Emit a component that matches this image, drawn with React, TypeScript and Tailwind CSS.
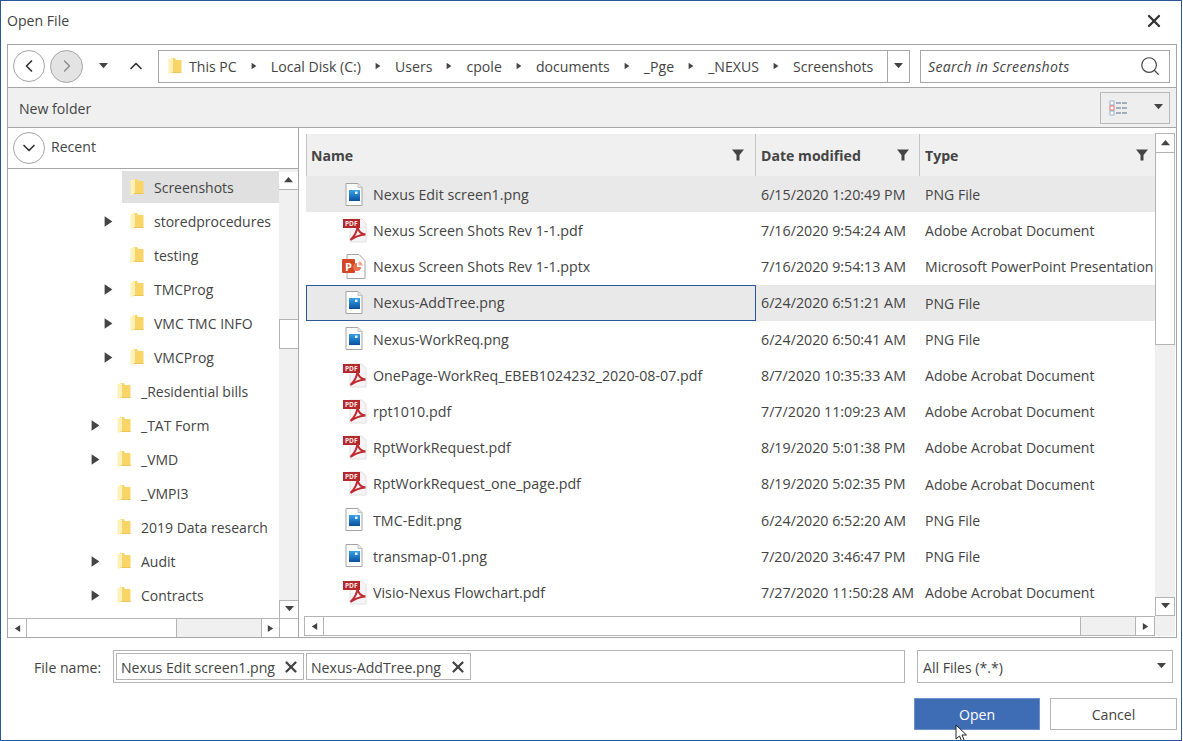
import React from 'react';
import { ChevronLeft, ChevronRight, ChevronDown, ChevronUp, Search, X } from 'lucide-react';

type FileKind = 'png' | 'pdf' | 'pptx';
type Dir = 'up' | 'down' | 'left' | 'right';

interface FileRow {
  name: string;
  date: string;
  type: string;
  kind: FileKind;
  selected?: boolean;
  focused?: boolean;
}

const files: FileRow[] = [
  { name: 'Nexus Edit screen1.png', date: '6/15/2020 1:20:49 PM', type: 'PNG File', kind: 'png', selected: true },
  { name: 'Nexus Screen Shots Rev 1-1.pdf', date: '7/16/2020 9:54:24 AM', type: 'Adobe Acrobat Document', kind: 'pdf' },
  { name: 'Nexus Screen Shots Rev 1-1.pptx', date: '7/16/2020 9:54:13 AM', type: 'Microsoft PowerPoint Presentation', kind: 'pptx' },
  { name: 'Nexus-AddTree.png', date: '6/24/2020 6:51:21 AM', type: 'PNG File', kind: 'png', selected: true, focused: true },
  { name: 'Nexus-WorkReq.png', date: '6/24/2020 6:50:41 AM', type: 'PNG File', kind: 'png' },
  { name: 'OnePage-WorkReq_EBEB1024232_2020-08-07.pdf', date: '8/7/2020 10:35:33 AM', type: 'Adobe Acrobat Document', kind: 'pdf' },
  { name: 'rpt1010.pdf', date: '7/7/2020 11:09:23 AM', type: 'Adobe Acrobat Document', kind: 'pdf' },
  { name: 'RptWorkRequest.pdf', date: '8/19/2020 5:01:38 PM', type: 'Adobe Acrobat Document', kind: 'pdf' },
  { name: 'RptWorkRequest_one_page.pdf', date: '8/19/2020 5:02:35 PM', type: 'Adobe Acrobat Document', kind: 'pdf' },
  { name: 'TMC-Edit.png', date: '6/24/2020 6:52:20 AM', type: 'PNG File', kind: 'png' },
  { name: 'transmap-01.png', date: '7/20/2020 3:46:47 PM', type: 'PNG File', kind: 'png' },
  { name: 'Visio-Nexus Flowchart.pdf', date: '7/27/2020 11:50:28 AM', type: 'Adobe Acrobat Document', kind: 'pdf' },
];

const tree: { label: string; deep: boolean; arrow: boolean; selected?: boolean }[] = [
  { label: 'Screenshots', deep: true, arrow: false, selected: true },
  { label: 'storedprocedures', deep: true, arrow: true },
  { label: 'testing', deep: true, arrow: false },
  { label: 'TMCProg', deep: true, arrow: true },
  { label: 'VMC TMC INFO', deep: true, arrow: true },
  { label: 'VMCProg', deep: true, arrow: true },
  { label: '_Residential bills', deep: false, arrow: false },
  { label: '_TAT Form', deep: false, arrow: true },
  { label: '_VMD', deep: false, arrow: true },
  { label: '_VMPI3', deep: false, arrow: false },
  { label: '2019 Data research', deep: false, arrow: false },
  { label: 'Audit', deep: false, arrow: true },
  { label: 'Contracts', deep: false, arrow: true },
];

const crumbs = ['This PC', 'Local Disk (C:)', 'Users', 'cpole', 'documents', '_Pge', '_NEXUS', 'Screenshots'];

const Folder = () => (
  <svg width="14" height="18" viewBox="0 0 14 18" className="shrink-0">
    <path d="M3 1h4l1 2h5.500v13H3z" fill="#f9d567" />
    <path d="M.5 2.500L5 1v14.500L.5 17.500z" fill="#fff1b8" />
    <path d="M5 15h8.500v1H3z" fill="#ecc45c" />
  </svg>
);

const PngIcon = () => (
  <svg width="18" height="23" viewBox="0 0 18 23">
    <path d="M1 .5h12l4 4v18H1z" fill="#fff" stroke="#a4a4a4" />
    <path d="M13 .5v4h4" fill="#e6e6e6" stroke="#c4c4c4" />
    <defs>
      <linearGradient id="pngfill" x1="0" y1="0" x2="0" y2="1">
        <stop offset="0" stopColor="#36a3ea" />
        <stop offset="1" stopColor="#0a4f9c" />
      </linearGradient>
    </defs>
    <rect x="4" y="7" width="11" height="11" fill="url(#pngfill)" />
    <rect x="10" y="8.500" width="2.500" height="2.500" fill="#e3f3ff" />
  </svg>
);

const PdfIcon = () => (
  <svg width="26" height="25" viewBox="0 0 26 25">
    <path d="M9 1h12l4 4v19H9z" fill="#f5f3f3" stroke="#e2e2e2" />
    <rect x="2" y="1" width="17" height="9" fill="#b3282d" />
    <text x="4" y="8" fontSize="6.500" fontWeight="700" fill="#f8e6e6">PDF</text>
    <path d="M16.500 8c-.2 5-3 10-7 14M16.500 8c.5 5 3.500 8 8 8.500M9.500 22c3-2.500 9.500-5.500 15-5.500" fill="none" stroke="#bf2a30" strokeWidth="2" />
  </svg>
);

const PptIcon = () => (
  <svg width="24" height="25" viewBox="0 0 24 25">
    <path d="M5 .5h12l6 6v18H5z" fill="#fff" stroke="#a4a4a4" />
    <rect x="0" y="5" width="13" height="14" rx="1" fill="#d24726" />
    <text x="3" y="16.500" fontSize="11" fontWeight="700" fill="#fff">P</text>
    <path d="M15 9a4 4 0 1 0 4 4h-4z" fill="#e8734f" />
    <path d="M16.500 7.500a4 4 0 0 1 4 4h-4z" fill="#f0a58c" />
  </svg>
);

const FileIcon = ({ kind }: { kind: FileKind }) => {
  if (kind === 'pdf') return <PdfIcon />;
  if (kind === 'pptx') return <PptIcon />;
  return <PngIcon />;
};

const Tri = ({ dir, size = 9, className }: { dir: Dir; size?: number; className?: string }) => {
  const pts = {
    up: '0,7 5,1 10,7',
    down: '0,1 10,1 5,7',
    left: '8,1 8,9 2,5',
    right: '2,1 2,9 8,5',
  }[dir];
  return (
    <svg width={size} height={size} viewBox="0 0 10 10" className={className}>
      <polygon points={pts} fill="#444" />
    </svg>
  );
};

const Funnel = () => (
  <svg width="12" height="12" viewBox="0 0 12 12">
    <path d="M0 .5h12L7.500 6v5.500h-3V6z" fill="#444" />
  </svg>
);

const ScrollBtn = ({ dir, className }: { dir: Dir; className: string }) => (
  <div className={`flex shrink-0 items-center justify-center border-[#b4b4b4] bg-white ${className}`}>
    <Tri dir={dir} />
  </div>
);

export default function App() {
  return (
    <div className="flex h-[741px] w-[1182px] flex-col overflow-hidden border border-[#2b579a] bg-white font-['Open_Sans',sans-serif] text-[14.1px] text-[#444]">
      <div className="flex h-[43px] shrink-0 items-center justify-between pb-[4px] pl-[6px] pr-[17px]">
        <span>Open File</span>
        <X size={20} strokeWidth={2.800} className="text-[#333]" />
      </div>

      <div className="mx-[6px] flex h-[594px] w-[1170px] shrink-0 flex-col border border-[#a6a6a6]">
        <div className="flex h-[43px] shrink-0 items-center border-b border-[#a6a6a6] pl-[5px]">
          <div className="flex h-[32px] w-[32px] items-center justify-center rounded-full border border-[#a6a6a6]">
            <ChevronLeft size={20} strokeWidth={2} className="text-[#333]" />
          </div>
          <div className="ml-[5px] flex h-[33px] w-[33px] items-center justify-center rounded-full border border-[#a6a6a6] bg-[#e3e3e3]">
            <ChevronRight size={20} strokeWidth={1.500} className="text-[#888]" />
          </div>
          <Tri dir="down" className="ml-[16px]" />
          <ChevronUp size={20} strokeWidth={2} className="ml-[18px] text-[#333]" />
          <div className="ml-[12px] flex h-[33px] w-[752px] items-center border border-[#a6a6a6]">
            <div className="flex min-w-0 flex-1 items-center pl-[9px]">
              <Folder />
              {crumbs.map((c, i) => (
                <React.Fragment key={c}>
                  <span className={`whitespace-nowrap pt-[2px] ${i === 0 ? 'ml-[7px]' : ''}`}>{c}</span>
                  {i < crumbs.length - 1 && (
                    <span className="flex w-[34.1px] justify-center">
                      <Tri dir="right" size={8} />
                    </span>
                  )}
                </React.Fragment>
              ))}
            </div>
            <div className="flex h-full w-[22px] items-center justify-center border-l border-[#a6a6a6]">
              <Tri dir="down" />
            </div>
          </div>
          <div className="ml-[10px] flex h-[33px] w-[250px] items-center justify-between border border-[#a6a6a6] pl-[7px] pr-[8px]">
            <span className="pt-[2px] italic tracking-[0.3px]">Search in Screenshots</span>
            <Search size={22} strokeWidth={1.300} className="text-[#444]" />
          </div>
        </div>

        <div className="flex h-[40px] shrink-0 items-center justify-between border-b border-[#a6a6a6] bg-[#f0f0f0] pl-[11px] pr-[6px]">
          <span className="pt-[2px]">New folder</span>
          <div className="flex h-[32px] w-[70px] items-center justify-between border border-[#b8b8b8] bg-[#eeeeee] pl-[8px] pr-[6px]">
            <svg width="20" height="16" viewBox="0 0 20 16">
              <rect x="1" y="1" width="4" height="4" fill="#fff" stroke="#7f9ec4" strokeWidth="0.800" />
              <rect x="1" y="6" width="4" height="4" fill="#fff" stroke="#d6584f" strokeWidth="0.800" />
              <rect x="1" y="11" width="4" height="4" fill="#fff" stroke="#7f9ec4" strokeWidth="0.800" />
              <path d="M7 3h12M7 8h12M7 13h12" stroke="#5b6f8c" strokeWidth="1" strokeDasharray="5 1" />
            </svg>
            <Tri dir="down" />
          </div>
        </div>

        <div className="flex min-h-0 flex-1">
          <div className="flex w-[291px] shrink-0 flex-col border-r border-[#a6a6a6]">
            <div className="flex h-[41px] shrink-0 items-center border-b border-[#a6a6a6] pl-[5px]">
              <div className="flex h-[32px] w-[32px] items-center justify-center rounded-full border border-[#a6a6a6]">
                <ChevronDown size={20} strokeWidth={2} className="text-[#333]" />
              </div>
              <span className="ml-[6px] pb-[2px]">Recent</span>
            </div>
            <div className="flex min-h-0 flex-1">
              <div className="min-w-0 flex-1 overflow-hidden pt-[1px] text-[14px]">
                {tree.map((t) => (
                  <div key={t.label} className="flex h-[34px] items-center">
                    <div className={`flex shrink-0 justify-end ${t.deep ? 'w-[107px]' : 'w-[94px]'}`}>
                      {t.arrow && <Tri dir="right" size={13} />}
                    </div>
                    <div className={`ml-[7px] flex h-[32px] flex-1 items-center pl-[8px] ${t.selected ? 'bg-[#e0e0e0]' : ''}`}>
                      <Folder />
                      <span className="ml-[10px] whitespace-nowrap">{t.label}</span>
                    </div>
                  </div>
                ))}
              </div>
              <div className="flex w-[19px] shrink-0 flex-col bg-[#f0f0f0] pt-[3px]">
                <ScrollBtn dir="up" className="h-[18px] border-b" />
                <div className="mt-[129px] h-[30px] border-y border-l border-[#b4b4b4] bg-white" />
                <div className="flex-1" />
                <ScrollBtn dir="down" className="h-[18px] border-l border-t" />
              </div>
            </div>
            <div className="flex h-[19px] shrink-0 border-t border-[#b4b4b4]">
              <ScrollBtn dir="left" className="w-[19px] border-r" />
              <div className="w-[150px] border-r border-[#b4b4b4] bg-white" />
              <div className="w-[84px] bg-[#f0f0f0]" />
              <ScrollBtn dir="right" className="w-[19px] border-l border-r" />
            </div>
          </div>

          <div className="flex min-w-0 flex-1 flex-col pl-[7px] pt-[6px]">
            <div className="flex min-h-0 flex-1">
              <div className="min-w-0 flex-1">
                <div className="flex h-[42px] border-l border-[#c4c4c4] bg-[#f0f0f0] font-bold">
                  <div className="flex w-[449px] items-center justify-between border-r border-[#c4c4c4] pl-[4px] pr-[11px]">
                    <span className="pt-[2px]">Name</span>
                    <Funnel />
                  </div>
                  <div className="flex w-[164px] items-center justify-between border-r border-[#c4c4c4] pl-[5px] pr-[10px]">
                    <span className="pt-[2px]">Date modified</span>
                    <Funnel />
                  </div>
                  <div className="flex flex-1 items-center justify-between pl-[5px] pr-[7px]">
                    <span className="pt-[2px]">Type</span>
                    <Funnel />
                  </div>
                </div>
                {files.map((f) => (
                  <div
                    key={f.name}
                    className={`relative flex h-[36.2px] items-center text-[14.25px] ${f.selected ? 'bg-[#e9e9e9]' : ''}`}
                  >
                    {f.focused && <div className="absolute left-0 top-0 h-full w-[450px] border border-[#2b579a]" />}
                    <div className="flex w-[67px] shrink-0 justify-center pl-[29px]">
                      <FileIcon kind={f.kind} />
                    </div>
                    <span className="w-[388px] shrink-0 truncate pt-[1px]">{f.name}</span>
                    <span className="w-[164px] shrink-0 whitespace-nowrap pt-[1px]">{f.date}</span>
                    <span className="min-w-0 flex-1 whitespace-nowrap pt-[1px] text-[14.05px]">{f.type}</span>
                  </div>
                ))}
              </div>
              <div className="-mt-[1px] mr-[1px] flex w-[20px] shrink-0 flex-col bg-[#f0f0f0]">
                <ScrollBtn dir="up" className="h-[20px] border" />
                <div className="h-[192px] border-x border-b border-[#b4b4b4] bg-white" />
                <div className="flex-1" />
                <ScrollBtn dir="down" className="h-[19px] border" />
              </div>
            </div>
            <div className="-ml-[2px] mb-[1px] mr-[1px] flex h-[20px] shrink-0">
              <div className="flex min-w-0 flex-1 border border-[#b4b4b4]">
                <ScrollBtn dir="left" className="w-[19px] border-r" />
                <div className="w-[757px] border-r border-[#b4b4b4] bg-white" />
                <div className="flex-1 bg-[#f0f0f0]" />
                <ScrollBtn dir="right" className="w-[19px] border-l" />
              </div>
              <div className="w-[20px] shrink-0 bg-[#f0f0f0]" />
            </div>
          </div>
        </div>
      </div>

      <div className="mt-[12px] flex h-[33px] shrink-0 items-center pl-[33px]">
        <span className="w-[79px] shrink-0 pt-[2px]">File name:</span>
        <div className="flex h-[33px] w-[792px] items-center gap-[2px] border border-[#b4b4b4] pl-[2px]">
          <div className="flex h-[27px] w-[188px] items-center justify-between border border-[#b4b4b4] pl-[4px] pr-[3px]">
            <span className="whitespace-nowrap pt-[2px]">Nexus Edit screen1.png</span>
            <X size={18} strokeWidth={3} className="text-[#444]" />
          </div>
          <div className="flex h-[27px] w-[165px] items-center justify-between border border-[#b4b4b4] pl-[4px] pr-[3px]">
            <span className="whitespace-nowrap pt-[2px]">Nexus-AddTree.png</span>
            <X size={18} strokeWidth={3} className="text-[#444]" />
          </div>
        </div>
        <div className="ml-[12px] flex h-[33px] w-[256px] items-center justify-between border border-[#b4b4b4] pl-[5px] pr-[6px]">
          <span className="pt-[2px]">All Files (*.*)</span>
          <Tri dir="down" />
        </div>
      </div>

      <div className="relative mt-[15px] flex h-[32px] shrink-0 justify-end gap-[10px] pr-[4px]">
        <div className="flex w-[126px] items-center justify-center border border-[#6d90c8] bg-[#3e6db5] pt-[2px] text-white">Open</div>
        <div className="flex w-[127px] items-center justify-center border border-[#b4b4b4] pt-[2px]">Cancel</div>
        <svg width="14" height="20" viewBox="0 0 14 20" className="absolute left-[954px] top-[26px]">
          <path d="M1 1v14l3.500-3 2.500 6 2.500-1-2.500-6h4.500z" fill="#fff" stroke="#222" strokeWidth="1" />
        </svg>
      </div>
    </div>
  );
}
